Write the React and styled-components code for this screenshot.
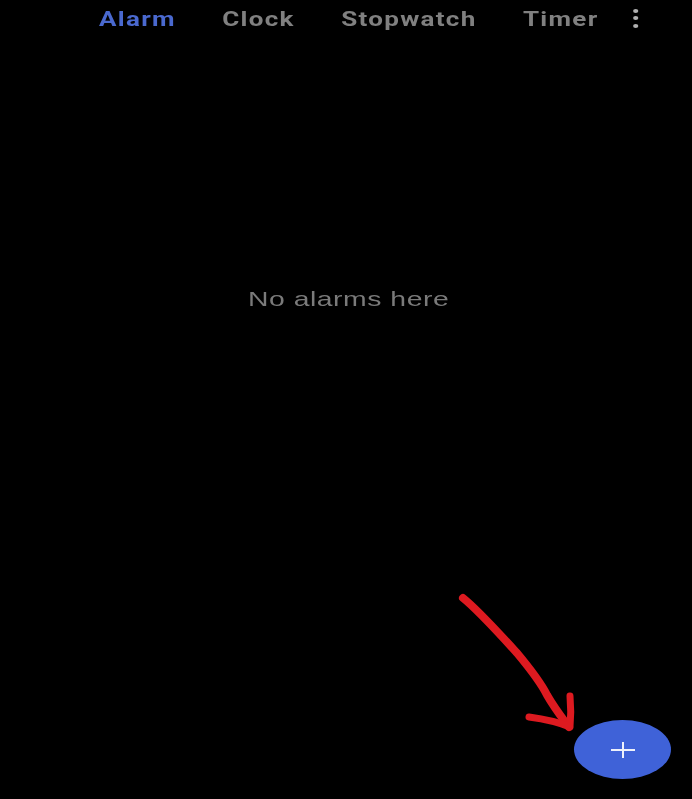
import React from 'react';
import styled, { createGlobalStyle } from 'styled-components';

const GlobalStyle = createGlobalStyle`
  html, body {
    margin: 0;
    padding: 0;
    background: #000;
  }
`;

const Screen = styled.div`
  position: relative;
  display: flex;
  flex-direction: column;
  width: 692px;
  height: 799px;
  overflow: hidden;
  background: #000;
  font-family: Roboto, "Liberation Sans", sans-serif;
`;

// the whole capture is stretched sideways, so the text is widened to follow it
const TabBar = styled.nav`
  display: flex;
  align-items: center;
  gap: 35.7px;
  height: 38px;
  padding-left: 76.2px;
  transform: scaleX(1.3);
  transform-origin: left center;
  filter: blur(0.4px);
`;

const Tab = styled.span`
  font-size: 20px;
  font-weight: 700;
  letter-spacing: 1px;
  line-height: 38px;
  color: ${(p) => (p.$active ? '#4a69cf' : '#808080')};
`;

const MoreButton = styled.span`
  display: flex;
  flex-direction: column;
  gap: 3.5px;
  margin: 0 0 2px -9px;
`;

const Dot = styled.i`
  display: block;
  width: 4px;
  height: 4px;
  border-radius: 50%;
  background: #b0b0b0;
`;

const EmptyState = styled.main`
  display: flex;
  justify-content: center;
  padding: 249px 0 0 5px;
`;

const EmptyText = styled.p`
  margin: 0;
  font-family: "Liberation Sans", Arial, sans-serif;
  font-size: 21px;
  line-height: 24px;
  letter-spacing: 0.4px;
  color: #7a7a7a;
  transform: scaleX(1.35);
  filter: blur(0.4px);
`;

const AddButton = styled.button`
  position: absolute;
  left: 574px;
  top: 720px;
  display: flex;
  align-items: center;
  justify-content: center;
  width: 97px;
  height: 59px;
  padding: 0;
  border: 0;
  border-radius: 50%;
  background: #3f62d8;
`;

const Annotation = styled.svg`
  position: absolute;
  left: 0;
  top: 0;
  pointer-events: none;
`;

export default function App() {
  return (
    <Screen>
      <GlobalStyle />
      <TabBar>
        <Tab $active>Alarm</Tab>
        <Tab>Clock</Tab>
        <Tab>Stopwatch</Tab>
        <Tab>Timer</Tab>
        <MoreButton>
          <Dot />
          <Dot />
          <Dot />
        </MoreButton>
      </TabBar>
      <EmptyState>
        <EmptyText>No alarms here</EmptyText>
      </EmptyState>
      <AddButton aria-label="Add alarm">
        <svg width="24" height="16" viewBox="0 0 24 16">
          <path d="M0 8H24M12 0V16" stroke="#eef1fb" strokeWidth="2" fill="none" />
        </svg>
      </AddButton>
      {/* red hand-drawn arrow pointing at the add button */}
      <Annotation width="692" height="799" viewBox="0 0 692 799">
        <path
          d="M463 598C478 610 497 631 517 653C532 671 541 683 547 695C555 709 563 719 569 727"
          stroke="#dd1a20"
          strokeWidth="8"
          strokeLinecap="round"
          fill="none"
        />
        <path
          d="M570 696C571 707 571 717 570 727C558 722 544 719 529 717"
          stroke="#dd1a20"
          strokeWidth="7"
          strokeLinecap="round"
          strokeLinejoin="round"
          fill="none"
        />
      </Annotation>
    </Screen>
  );
}
